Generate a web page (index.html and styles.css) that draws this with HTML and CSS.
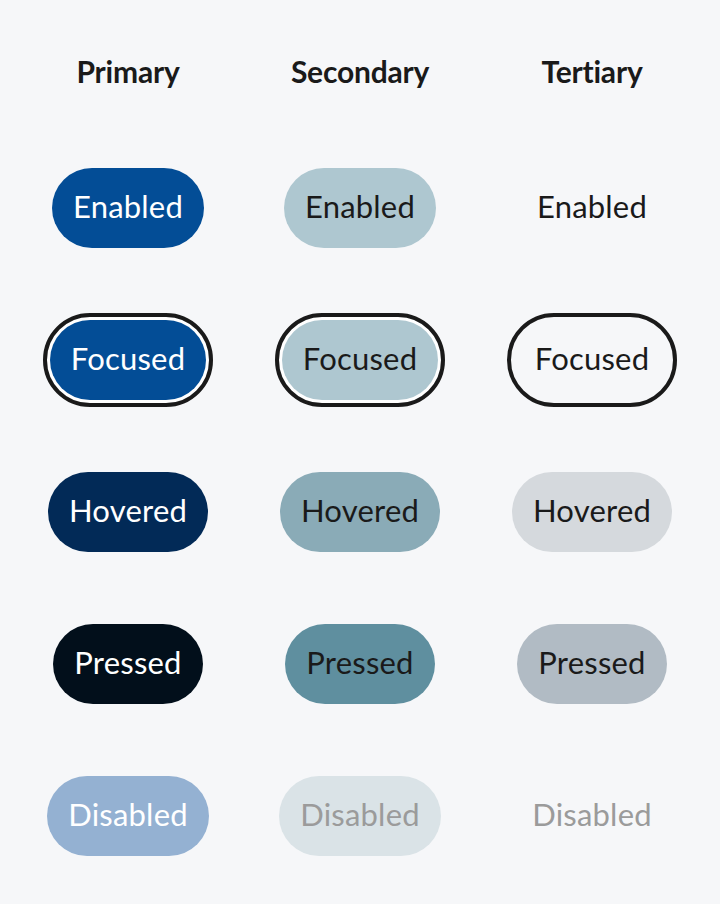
FILE: index.html
```html
<!DOCTYPE html>
<html lang="en">
<head>
    <meta charset="UTF-8">
    <title>Button states</title>
    <link rel="stylesheet" href="styles.css">
</head>
<body>
<div class="board">
    <div class="col">
        <h2>Primary</h2>
        <button class="btn primary">Enabled</button>
        <button class="btn primary focused">Focused</button>
        <button class="btn primary hovered">Hovered</button>
        <button class="btn primary pressed">Pressed</button>
        <button class="btn primary" disabled>Disabled</button>
    </div>
    <div class="col">
        <h2>Secondary</h2>
        <button class="btn secondary">Enabled</button>
        <button class="btn secondary focused">Focused</button>
        <button class="btn secondary hovered">Hovered</button>
        <button class="btn secondary pressed">Pressed</button>
        <button class="btn secondary" disabled>Disabled</button>
    </div>
    <div class="col">
        <h2>Tertiary</h2>
        <button class="btn tertiary">Enabled</button>
        <button class="btn tertiary focused">Focused</button>
        <button class="btn tertiary hovered">Hovered</button>
        <button class="btn tertiary pressed">Pressed</button>
        <button class="btn tertiary" disabled>Disabled</button>
    </div>
</div>
</body>
</html>
```

FILE: styles.css
```css
body { margin: 0; background-color: #f6f7f9; font-family: Lato, "Liberation Sans", sans-serif; color: #1a1a1a; }
.board { display: grid; grid-template-columns: repeat(3, 1fr); padding: 32px 12px 48px; }
.col { display: flex; flex-direction: column; align-items: center; gap: 72px; }
h2 { margin: 0 0 -16px 0; height: 80px; line-height: 78px; font-size: 30px; font-weight: 700; letter-spacing: -0.2px; }

.btn { height: 80px; padding: 0 21px 4px; border: none; border-radius: 40px; font-family: inherit; font-size: 31px; font-weight: 400; letter-spacing: 0.2px; cursor: pointer; background: transparent; color: #1a1a1a; }
/* focus ring: white gap then dark outline */
.btn.focused { outline: 4px solid #1a1a1a; outline-offset: 3px; box-shadow: 0 0 0 3px #fff; }

.primary { background-color: #034d96; color: #fff; }
.primary.hovered { background-color: #022a57; }
.primary.pressed { background-color: #020f1b; }
.primary:disabled { background-color: #94b1d2; color: #fff; }

.secondary { background-color: #aec7d0; }
.secondary.hovered { background-color: #8aabb7; }
.secondary.pressed { background-color: #5f8f9f; }
.secondary:disabled { background-color: #dae3e7; color: #9b9b9b; }

.tertiary.focused { box-shadow: none; }
.tertiary.hovered { background-color: #d5d9dd; }
.tertiary.pressed { background-color: #b1bbc4; }
.tertiary:disabled { color: #9b9b9b; }
```
